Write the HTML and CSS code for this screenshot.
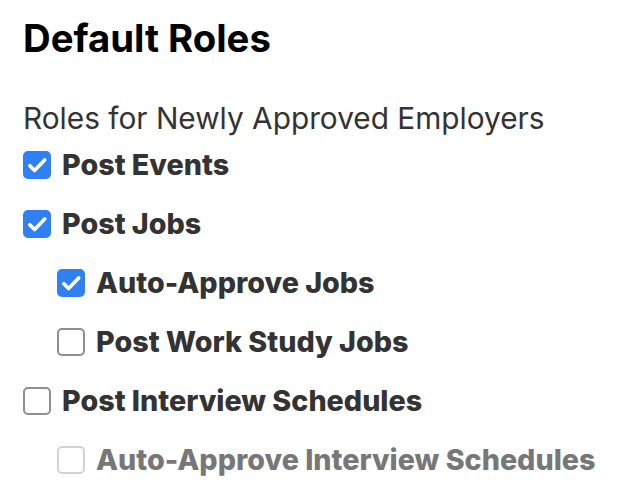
FILE: index.html
```html
<!DOCTYPE html>
<html>
  <head>
    <title>Default Roles</title>
    <link rel="stylesheet" href="styles.css">
  </head>
  <body>
    <div class="container">
      <h1>Default Roles</h1>
      <p class="subtitle">Roles for Newly Approved Employers</p>
      <ul class="roles">
        <li class="role">
          <label><span class="box checked"></span>Post Events</label>
        </li>
        <li class="role">
          <label><span class="box checked"></span>Post Jobs</label>
          <ul class="roles nested">
            <li class="role">
              <label><span class="box checked"></span>Auto-Approve Jobs</label>
            </li>
            <li class="role">
              <label><span class="box"></span>Post Work Study Jobs</label>
            </li>
          </ul>
        </li>
        <li class="role">
          <label><span class="box"></span>Post Interview Schedules</label>
          <ul class="roles nested">
            <li class="role disabled">
              <label><span class="box"></span>Auto-Approve Interview Schedules</label>
            </li>
          </ul>
        </li>
      </ul>
    </div>
  </body>
</html>
```

FILE: styles.css
```css
body {
  margin: 0;
  font-family: Inter, "Noto Sans", sans-serif;
  color: #333;
  background: #fff;
}
.container {
  padding: 16px 0 16px 23px;
}
h1 {
  margin: 0 0 42px;
  font-size: 38.3px;
  font-weight: 700;
  color: #000;
  line-height: 44px;
}
.subtitle {
  margin: 0;
  font-size: 29.8px;
  line-height: 33px;
}
.roles {
  list-style: none;
  margin: 0;
  padding: 0;
}
.nested {
  padding-left: 34px;
}
.role label {
  display: flex;
  align-items: center;
  gap: 11px;
  height: 59px;
  font-size: 28.7px;
  font-weight: 800;
  color: #333;
  white-space: nowrap;
}
.box {
  width: 24px;
  height: 24px;
  border: 2.5px solid #8e8e93;
  border-radius: 5px;
  flex-shrink: 0;
}
.box.checked {
  border-color: #2f80f5;
  background: #2f80f5 url("data:image/svg+xml,%3Csvg xmlns='http://www.w3.org/2000/svg' viewBox='0 0 24 24'%3E%3Cpath d='M5 12.5l4.5 4.5L19 7' fill='none' stroke='white' stroke-width='3.4' stroke-linecap='round' stroke-linejoin='round'/%3E%3C/svg%3E") center/25px no-repeat;
}
.disabled label {
  color: #777;
}
.disabled .box {
  border-color: #d1d1d6;
}
```
